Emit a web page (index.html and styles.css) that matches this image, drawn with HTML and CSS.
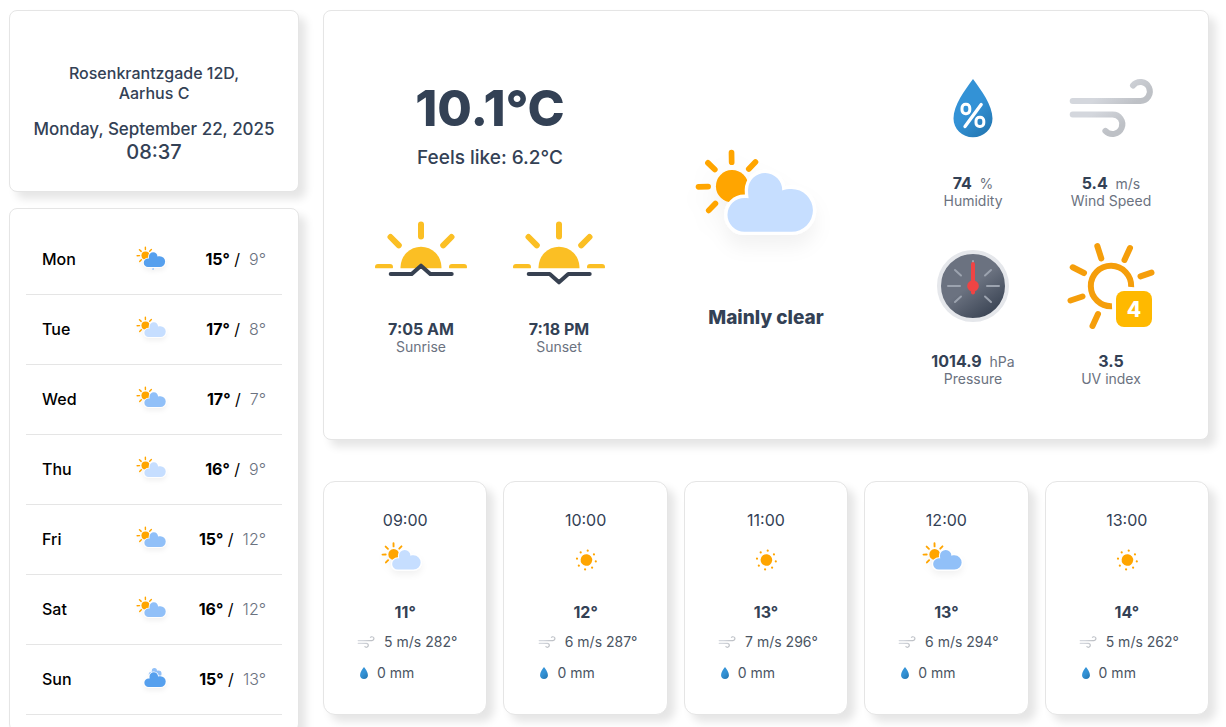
FILE: index.html
```html
<!DOCTYPE html>
<html lang="en">
<head>
<meta charset="utf-8">
<title>Weather</title>
<link rel="stylesheet" href="styles.css">
</head>
<body>
<svg class="defs" aria-hidden="true">
  <defs>
    <filter id="soft" x="-30%" y="-30%" width="160%" height="180%">
      <feDropShadow dx="0" dy="4" stdDeviation="3" flood-color="#000" flood-opacity="0.05"/>
    </filter>
    <linearGradient id="sunFill" x1="0" y1="0" x2="1" y2="2">
      <stop offset="0.45" stop-color="#fbbf24"/><stop offset="1" stop-color="#f08c10"/>
    </linearGradient>
    <linearGradient id="dropFill" x1="0.2" y1="0.1" x2="0.8" y2="1">
      <stop offset="0.45" stop-color="#3392d6"/><stop offset="1" stop-color="#2477b2"/>
    </linearGradient>
    <linearGradient id="windTop" gradientUnits="userSpaceOnUse" x1="60" y1="31" x2="84" y2="62">
      <stop offset="0.3" stop-color="#d4d7dd"/><stop offset="1" stop-color="#bec1c6"/>
    </linearGradient>
    <linearGradient id="windLow" gradientUnits="userSpaceOnUse" x1="45" y1="58" x2="62" y2="88">
      <stop offset="0.3" stop-color="#d4d7dd"/><stop offset="1" stop-color="#bec1c6"/>
    </linearGradient>
    <linearGradient id="dial" x1="0.2" y1="0.1" x2="0.8" y2="0.95">
      <stop offset="0.45" stop-color="#6b7280"/><stop offset="1" stop-color="#374151"/>
    </linearGradient>
    <path id="cloudShape" d="M40.5 42.6H24.8A5.65 5.65 0 0 1 24.8 31.3c.5 0 1 0 1.4.1C26.1 30.6 26 29.7 26 28.6A5.7 5.7 0 0 1 37.4 28.8c1-.4 2-.5 3.1-.5a7.15 7.15 0 0 1 0 14.3z"/>
    <g id="sunRays" transform="translate(20.7 27.4) rotate(-1)" stroke="#ffa500" stroke-width="1.9" stroke-linecap="round">
      <circle r="5.4" fill="#ffa500" stroke="none"/>
      <path d="M0-8V-11.2M0 8V11.2M8 0H11.2M-8 0H-11.2M5.66-5.66L7.92-7.92M-5.66-5.66L-7.92-7.92M-5.66 5.66L-7.92 7.92M5.66 5.66L7.92 7.92"/>
    </g>
    <symbol id="sun-cloud" viewBox="0 0 64 64">
      <g filter="url(#soft)"><use href="#sunRays"/><use class="cloud" href="#cloudShape"/></g>
    </symbol>
    <symbol id="sun-rain" viewBox="0 0 64 64">
      <g filter="url(#soft)"><use href="#sunRays"/><use class="cloud" href="#cloudShape" x="-0.8"/><path d="M31 44.2L30.6 46.6" stroke="#91c0f8" stroke-width="1.8"/></g>
    </symbol>
    <symbol id="clouds" viewBox="0 0 64 64">
      <g filter="url(#soft)"><use class="cloud back" href="#cloudShape" transform="translate(13.5 3.6) scale(.6)"/><use class="cloud" href="#cloudShape"/></g>
    </symbol>
    <symbol id="clear" viewBox="0 0 64 64">
      <g transform="translate(32.4 33) rotate(8)" fill="#ffa500">
        <circle r="5.8"/>
        <circle cy="-9.5" r="1.1"/><circle cy="9.5" r="1.1"/><circle cx="-9.5" r="1.1"/><circle cx="9.5" r="1.1"/>
        <circle cx="6.7" cy="-6.7" r="1.1"/><circle cx="-6.7" cy="-6.7" r="1.1"/><circle cx="6.7" cy="6.7" r="1.1"/><circle cx="-6.7" cy="6.7" r="1.1"/>
      </g>
    </symbol>
    <clipPath id="aboveHorizon"><path d="M0 0H128V78.3H0z"/></clipPath>
    <g id="halfSun" clip-path="url(#aboveHorizon)">
      <circle cx="64" cy="77.3" r="20.5" fill="url(#sunFill)"/>
      <path d="M64 34.5V46.5M33.5 47L41.8 55.3M94.5 47L86.2 55.3M21 77H33M95 77H107" stroke="#fbbf24" stroke-width="6" stroke-linecap="round"/>
    </g>
    <symbol id="wind" viewBox="0 0 128 128">
      <g fill="none" stroke-width="6" stroke-linecap="round">
        <path stroke="url(#windTop)" d="M25.7 57H93.2A9.5 9.5 0 1 0 86 41.5"/>
        <path stroke="url(#windLow)" d="M25.7 70.4H65.2A9.8 9.8 0 1 1 58.4 86.9"/>
      </g>
    </symbol>
    <symbol id="drop" viewBox="0 0 128 128">
      <path fill="url(#dropFill)" d="M64 35C56 46 44.5 61 44.5 74.5C44.5 85 53 93.3 64 93.3S83.5 85 83.5 74.5C83.5 61 72 46 64 35z"/>
    </symbol>
  </defs>
</svg>

<main class="page">
  <aside class="side">
    <section class="card place">
      <p class="address">Rosenkrantzgade 12D,<br>Aarhus C</p>
      <p class="date">Monday, September 22, 2025</p>
      <p class="time">08:37</p>
    </section>
    <section class="card week">
      <ul class="days">
        <li class="day"><span class="name">Mon</span><svg class="icon-s deep"><use href="#sun-rain"/></svg><span class="range"><b>15°</b> /&nbsp; <span class="low">9°</span></span></li>
        <li class="day"><span class="name">Tue</span><svg class="icon-s pale"><use href="#sun-cloud"/></svg><span class="range"><b>17°</b> /&nbsp; <span class="low">8°</span></span></li>
        <li class="day"><span class="name">Wed</span><svg class="icon-s mid"><use href="#sun-cloud"/></svg><span class="range"><b>17°</b> /&nbsp; <span class="low">7°</span></span></li>
        <li class="day"><span class="name">Thu</span><svg class="icon-s pale"><use href="#sun-cloud"/></svg><span class="range"><b>16°</b> /&nbsp; <span class="low">9°</span></span></li>
        <li class="day"><span class="name">Fri</span><svg class="icon-s mid"><use href="#sun-cloud"/></svg><span class="range"><b>15°</b> /&nbsp; <span class="low">12°</span></span></li>
        <li class="day"><span class="name">Sat</span><svg class="icon-s mid"><use href="#sun-cloud"/></svg><span class="range"><b>16°</b> /&nbsp; <span class="low">12°</span></span></li>
        <li class="day"><span class="name">Sun</span><svg class="icon-s deep"><use href="#clouds"/></svg><span class="range"><b>15°</b> /&nbsp; <span class="low">13°</span></span></li>
      </ul>
    </section>
  </aside>

  <div class="content">
    <section class="card current">
      <div class="column">
        <h1 class="temperature">10.1°C</h1>
        <p class="feels">Feels like: 6.2°C</p>
        <div class="pair">
          <div class="metric">
            <svg class="icon-m" viewBox="0 0 128 128"><use href="#halfSun"/><path d="M33.7 84H54.7L64 75.7L73.3 84H94.7" fill="none" stroke="#374151" stroke-width="4" stroke-linecap="round" stroke-linejoin="round"/></svg>
            <p class="value">7:05 AM</p><p class="label">Sunrise</p>
          </div>
          <div class="metric">
            <svg class="icon-m" viewBox="0 0 128 128"><use href="#halfSun"/><path d="M33.7 84H54.7L64 92.3L73.3 84H94.7" fill="none" stroke="#374151" stroke-width="4" stroke-linecap="round" stroke-linejoin="round"/></svg>
            <p class="value">7:18 PM</p><p class="label">Sunset</p>
          </div>
        </div>
      </div>
      <div class="column">
        <svg class="icon-l pale"><use href="#sun-cloud"/></svg>
        <p class="summary">Mainly clear</p>
      </div>
      <div class="metrics">
        <div class="metric">
          <svg class="icon-m" viewBox="0 0 128 128"><use href="#drop"/>
            <g fill="none" stroke="#fff" stroke-width="3" stroke-linecap="round"><rect x="53" y="60.3" width="7.8" height="9.4" rx="3.6"/><rect x="67" y="73.2" width="7.8" height="9.4" rx="3.6"/><path d="M72.2 60.6L56 82.6" stroke-width="3.3"/></g></svg>
          <p class="value">74 <span class="unit">%</span></p><p class="label">Humidity</p>
        </div>
        <div class="metric">
          <svg class="icon-m"><use href="#wind"/></svg>
          <p class="value">5.4 <span class="unit">m/s</span></p><p class="label">Wind Speed</p>
        </div>
        <div class="metric">
          <svg class="icon-m" viewBox="0 0 128 128">
            <circle cx="64" cy="64" r="34" fill="url(#dial)" stroke="#e5e7eb" stroke-width="4"/>
            <path d="M64 39V44M39 64H51M78 64H90M46 48L52 53.5M82 48L76 53.5M46 80L52 74.5M82 80L76 74.5" stroke="#9ca3af" stroke-width="2" stroke-linecap="round"/>
            <path d="M64 42V70.5" stroke="#ef4444" stroke-width="4" stroke-linecap="round"/><circle cx="64" cy="64" r="5.8" fill="#ef4444"/>
          </svg>
          <p class="value">1014.9 <span class="unit">hPa</span></p><p class="label">Pressure</p>
        </div>
        <div class="metric">
          <svg class="icon-m" viewBox="0 0 128 128">
            <g fill="none" stroke="#f59e0b" stroke-width="6">
              <path d="M84.2 65A20.2 20.2 0 1 0 65 84.2"/>
              <path stroke-linecap="round" d="M50.3 24L54.3 36.5M83 26L77.5 38M25.7 45.3L37 51M104.5 50.7L93.5 54.3M23.5 78.5L35.500 74.5M45.5 104L51 92"/>
            </g>
            <rect x="69" y="69" width="36" height="36" rx="8" fill="#ffb900"/>
            <text class="uv" x="87" y="95">4</text>
          </svg>
          <p class="value">3.5</p><p class="label">UV index</p>
        </div>
      </div>
    </section>

    <section class="hours">
      <article class="card hour"><p class="clock">09:00</p><svg class="icon-h pale"><use href="#sun-cloud"/></svg><p class="degrees">11°</p>
        <p class="detail"><svg class="icon-w"><use href="#wind"/></svg>5 m/s 282°</p><p class="detail rain"><svg class="icon-d"><use href="#drop"/></svg>0 mm</p></article>
      <article class="card hour"><p class="clock">10:00</p><svg class="icon-h"><use href="#clear"/></svg><p class="degrees">12°</p>
        <p class="detail"><svg class="icon-w"><use href="#wind"/></svg>6 m/s 287°</p><p class="detail rain"><svg class="icon-d"><use href="#drop"/></svg>0 mm</p></article>
      <article class="card hour"><p class="clock">11:00</p><svg class="icon-h"><use href="#clear"/></svg><p class="degrees">13°</p>
        <p class="detail"><svg class="icon-w"><use href="#wind"/></svg>7 m/s 296°</p><p class="detail rain"><svg class="icon-d"><use href="#drop"/></svg>0 mm</p></article>
      <article class="card hour"><p class="clock">12:00</p><svg class="icon-h mid"><use href="#sun-cloud"/></svg><p class="degrees">13°</p>
        <p class="detail"><svg class="icon-w"><use href="#wind"/></svg>6 m/s 294°</p><p class="detail rain"><svg class="icon-d"><use href="#drop"/></svg>0 mm</p></article>
      <article class="card hour"><p class="clock">13:00</p><svg class="icon-h"><use href="#clear"/></svg><p class="degrees">14°</p>
        <p class="detail"><svg class="icon-w"><use href="#wind"/></svg>5 m/s 262°</p><p class="detail rain"><svg class="icon-d"><use href="#drop"/></svg>0 mm</p></article>
    </section>
  </div>
</main>
</body>
</html>
```
FILE: styles.css
```css
* { box-sizing: border-box; }
body { margin: 0; background: #fff; color: #334155; font-family: Inter, "Liberation Sans", sans-serif; font-size: 16px; }
p, h1, ul { margin: 0; padding: 0; }
svg { display: block; flex: none; }
.defs { position: absolute; width: 0; height: 0; }

.page { display: grid; grid-template-columns: 290px minmax(0, 1fr); align-items: start; gap: 24px; padding: 10px 17px 0 9px; }
.card { background: #fff; border: 1px solid #e5e5e5; border-radius: 8px; box-shadow: 7px 7px 8px rgba(0, 0, 0, 0.1); }
.side { display: grid; gap: 16px; }

.place { padding: 52px 16px 27px; text-align: center; font-weight: 500; }
.address { line-height: 20px; margin-bottom: 15px; }
.date { font-size: 17px; line-height: 22px; }
.time { font-size: 20px; line-height: 24px; }

.week { padding: 16px; color: #000; }
.days { list-style: none; }
.day { display: grid; grid-template-columns: 1fr 48px 1fr; align-items: center; height: 70px; padding: 0 16px 2px; border-bottom: 1px solid #e5e5e5; }
.name { font-weight: 500; }
.range { text-align: right; white-space: nowrap; }
.range b { font-weight: 700; }
.low { color: #6b7280; font-weight: 300; }

.icon-s { width: 48px; height: 48px; }
.icon-h { width: 64px; height: 64px; }
.icon-m { width: 128px; height: 128px; }
.icon-l { width: 192px; height: 192px; }
.pale { fill: #c6deff; }
.mid { fill: #91c0f8; }
.deep { fill: #57a0ee; }
.cloud { stroke: #fff; stroke-width: 2.2px; paint-order: stroke; stroke-linejoin: round; }
.back { fill: #91c0f8; }

.content { display: grid; gap: 41px; }
.current { display: grid; grid-template-columns: repeat(3, 1fr); align-items: center; padding: 33px 28px 52px; }
.column { display: flex; flex-direction: column; align-items: center; }
.temperature { font-size: 50px; line-height: 64px; font-weight: 800; }
.feels { font-size: 19px; line-height: 24px; font-weight: 500; margin: 6px 0 20px; }
.pair { display: grid; grid-template-columns: 1fr 1fr; width: 100%; }
.metrics { display: grid; grid-template-columns: 1fr 1fr; row-gap: 13px; }
.metric { display: flex; flex-direction: column; align-items: center; }
.value { font-weight: 700; line-height: 20px; margin-top: 1px; }
.unit { margin-left: 4px; color: #6b7280; font-size: 14px; line-height: 1; font-weight: 400; }
.label { color: #6b7280; font-size: 14px; line-height: 16px; }
.summary { font-size: 19px; line-height: 20px; font-weight: 800; margin-top: 12px; }
.uv { fill: #fff; font-size: 21px; font-weight: 800; text-anchor: middle; }

.hours { display: grid; grid-template-columns: repeat(5, 1fr); gap: 16px; }
.hour { display: flex; flex-direction: column; align-items: center; padding: 28px 16px; border-radius: 12px; }
.clock { line-height: 20px; margin-bottom: -3px; }
.degrees { font-weight: 700; line-height: 20px; margin: 11px 0 7px; }
.detail { display: flex; align-items: center; font-size: 14px; line-height: 20px; color: #4b5563; }
.icon-w { width: 26px; height: 26px; margin-right: 5px; }
.rain { align-self: flex-start; margin: 5px 0 0 11px; }
.icon-d { width: 26px; height: 26px; }
```
